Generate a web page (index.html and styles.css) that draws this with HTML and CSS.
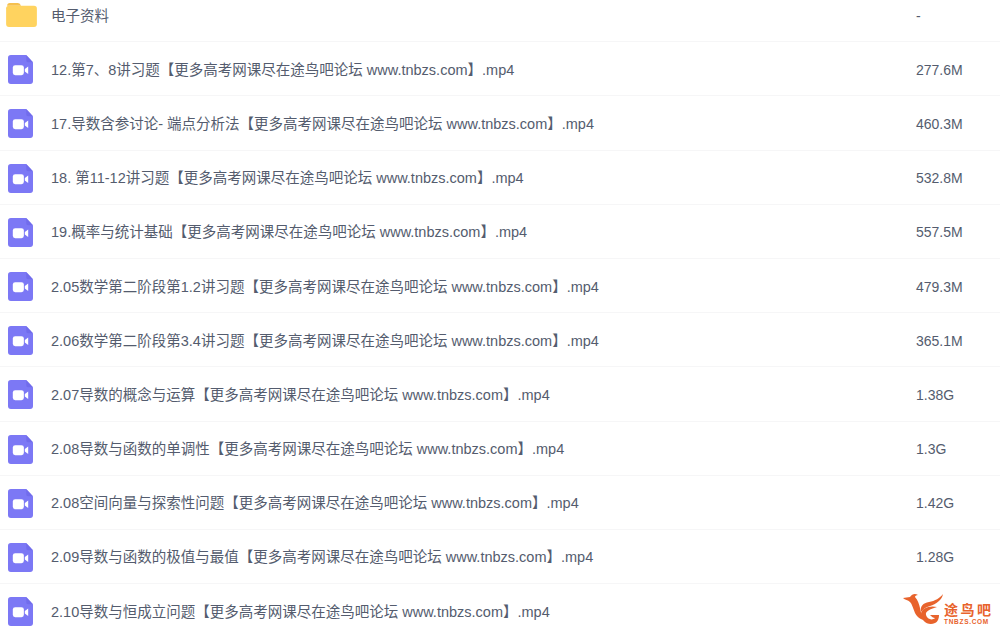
FILE: index.html
```html
<!DOCTYPE html>
<html lang="en">
<head>
    <meta charset="UTF-8">
    <title>文件列表</title>
    <link rel="stylesheet" href="styles.css">
</head>
<body>
    <div class="file-list">
        <div class="row">
            <svg class="icon folder" viewBox="0 0 32 26"><path fill="#f5c04e" d="M1 4.500C1 2 2 1 4 1h8c1.500 0 2.500.6 3.500 3H1z"/><path fill="#ffd35f" d="M0 6.500C0 5 1 4 3 4h26c2 0 3 1 3 3v16c0 2-1 3-3 3H3c-2 0-3-1-3-3z"/></svg>
            <span class="name">电子资料</span>
            <span class="size">-</span>
        </div>
        <div class="row">
            <svg class="icon"><use href="#video"/></svg>
            <span class="name">12.第7、8讲习题【更多高考网课尽在途鸟吧论坛 www.tnbzs.com】.mp4</span>
            <span class="size">277.6M</span>
        </div>
        <div class="row">
            <svg class="icon"><use href="#video"/></svg>
            <span class="name">17.导数含参讨论- 端点分析法【更多高考网课尽在途鸟吧论坛 www.tnbzs.com】.mp4</span>
            <span class="size">460.3M</span>
        </div>
        <div class="row">
            <svg class="icon"><use href="#video"/></svg>
            <span class="name">18. 第11-12讲习题【更多高考网课尽在途鸟吧论坛 www.tnbzs.com】.mp4</span>
            <span class="size">532.8M</span>
        </div>
        <div class="row">
            <svg class="icon"><use href="#video"/></svg>
            <span class="name">19.概率与统计基础【更多高考网课尽在途鸟吧论坛 www.tnbzs.com】.mp4</span>
            <span class="size">557.5M</span>
        </div>
        <div class="row">
            <svg class="icon"><use href="#video"/></svg>
            <span class="name">2.05数学第二阶段第1.2讲习题【更多高考网课尽在途鸟吧论坛 www.tnbzs.com】.mp4</span>
            <span class="size">479.3M</span>
        </div>
        <div class="row">
            <svg class="icon"><use href="#video"/></svg>
            <span class="name">2.06数学第二阶段第3.4讲习题【更多高考网课尽在途鸟吧论坛 www.tnbzs.com】.mp4</span>
            <span class="size">365.1M</span>
        </div>
        <div class="row">
            <svg class="icon"><use href="#video"/></svg>
            <span class="name">2.07导数的概念与运算【更多高考网课尽在途鸟吧论坛 www.tnbzs.com】.mp4</span>
            <span class="size">1.38G</span>
        </div>
        <div class="row">
            <svg class="icon"><use href="#video"/></svg>
            <span class="name">2.08导数与函数的单调性【更多高考网课尽在途鸟吧论坛 www.tnbzs.com】.mp4</span>
            <span class="size">1.3G</span>
        </div>
        <div class="row">
            <svg class="icon"><use href="#video"/></svg>
            <span class="name">2.08空间向量与探索性问题【更多高考网课尽在途鸟吧论坛 www.tnbzs.com】.mp4</span>
            <span class="size">1.42G</span>
        </div>
        <div class="row">
            <svg class="icon"><use href="#video"/></svg>
            <span class="name">2.09导数与函数的极值与最值【更多高考网课尽在途鸟吧论坛 www.tnbzs.com】.mp4</span>
            <span class="size">1.28G</span>
        </div>
        <div class="row">
            <svg class="icon"><use href="#video"/></svg>
            <span class="name">2.10导数与恒成立问题【更多高考网课尽在途鸟吧论坛 www.tnbzs.com】.mp4</span>
            <span class="size"></span>
        </div>
    </div>

    <!-- watermark -->
    <div class="watermark">
        <svg class="wm-bird" viewBox="0 0 42 34">
            <path fill="#e8632c" d="M1 5 8 4C10 1 13 0 16 2 14 2 13 3 13 4 16 7 17 11 18 15 19 21 21 25 26 27 22 28 16 26 13 20 11 15 10 11 8 9 6 7 3 7 1 5z"/>
            <path fill="#e8632c" d="M41 1C40 7 34 11 28 13 24 14 21 16 19 19 18 13 21 10 27 9 33 8 38 5 41 1z"/>
            <path fill="#e8632c" d="M35 14C28 12 19 15 19 21 19 28 26 33 33 30 36 29 37 25 37 22H28C30 24 31 25 33 25 30 28 25 26 24 22 23 18 29 16 35 14z"/>
        </svg>
        <div class="wm-text">
            <span class="wm-cn">途鸟吧</span>
            <span class="wm-en">TNBZS.COM</span>
        </div>
    </div>

    <svg class="defs" width="0" height="0">
        <symbol id="video" viewBox="0 0 26 30">
            <path fill="#7c78f5" d="M3 0h16l7 7.500V27c0 2-1 3-3 3H3c-2 0-3-1-3-3V3c0-2 1-3 3-3z"/>
            <path fill="#6a64e6" d="M19 0l7 7.500h-5c-1.500 0-2-.7-2-2z" opacity=".6"/>
            <rect fill="#fff" x="5" y="10.500" width="11.500" height="10.500" rx="2.500"/>
            <path fill="#fff" d="M17.500 14.500 21 11.800v7.900l-3.500-2.700z"/>
        </symbol>
    </svg>
</body>
</html>
```

FILE: styles.css
```css
* {
    margin: 0;
    padding: 0;
    box-sizing: border-box;
}

html, body {
    height: 100%;
    overflow: hidden;
}

body {
    background-color: #fff;
    color: #545c6e;
    font-family: "Liberation Sans", "Noto Sans CJK SC", sans-serif;
    font-size: 14px;
    position: relative;
}

.file-list {
    margin-top: -12px;
}

.row {
    display: flex;
    align-items: center;
    height: 54.2px;
    border-bottom: 1px solid #f6f6f7;
}

.icon {
    width: 25px;
    height: 29px;
    margin: 2px 18px 0 8px;
    flex: none;
}

.icon.folder {
    width: 31px;
    height: 25px;
    margin: 0 14px 0 6px;
}

.name {
    flex: 1;
    font-size: 14.5px;
    white-space: nowrap;
    padding-bottom: 1px;
}

.size {
    width: 84px;
    flex: none;
    padding-top: 2px;
}

.defs {
    position: absolute;
}

.watermark {
    position: absolute;
    left: 902px;
    top: 593px;
    display: flex;
    color: #e8632c;
}

.wm-bird {
    width: 42px;
    height: 34px;
}

.wm-text {
    display: flex;
    flex-direction: column;
    padding-top: 10px;
}

.wm-cn {
    font-size: 14px;
    line-height: 15px;
    letter-spacing: 2.500px;
    font-weight: bold;
}

.wm-en {
    font-family: "Liberation Sans", sans-serif;
    font-size: 6.500px;
    line-height: 7px;
    font-weight: bold;
    letter-spacing: .7px;
}
```
